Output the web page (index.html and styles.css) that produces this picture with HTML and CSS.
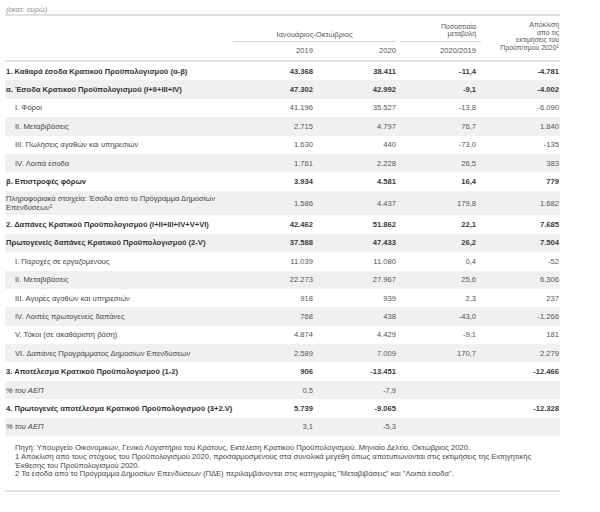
FILE: index.html
```html
<!DOCTYPE html>
<html lang="el">
<head>
<meta charset="utf-8">
<title>Εκτέλεση Κρατικού Προϋπολογισμού</title>
<link rel="stylesheet" href="styles.css">
</head>
<body>
<div class="page">
  <div class="unit">(εκατ. ευρώ)</div>
  <div class="head">
    <div class="h-period">Ιανουάριος-Οκτώβριος</div>
    <div class="h-change">Ποσοστιαία<br>μεταβολή</div>
    <div class="h-dev">Απόκλιση<br>από τις<br>εκτιμήσεις του<br>Προϋπ/σμού 2020<sup>1</sup></div>
    <div class="h-year y1">2019</div>
    <div class="h-year y2">2020</div>
    <div class="h-year y3">2020/2019</div>
  </div>
  <div class="rows">
    <div class="row bold"><div class="lbl">1. Καθαρά έσοδα Κρατικού Προϋπολογισμού (α-β)</div><div class="num">43.368</div><div class="num">38.411</div><div class="num">-11,4</div><div class="num">-4.781</div></div>
    <div class="row bold"><div class="lbl">α. Έσοδα Κρατικού Προϋπολογισμού (I+II+III+IV)</div><div class="num">47.302</div><div class="num">42.992</div><div class="num">-9,1</div><div class="num">-4.002</div></div>
    <div class="row sub"><div class="lbl">I. Φόροι</div><div class="num">41.196</div><div class="num">35.527</div><div class="num">-13,8</div><div class="num">-6.090</div></div>
    <div class="row sub"><div class="lbl">II. Μεταβιβάσεις</div><div class="num">2.715</div><div class="num">4.797</div><div class="num">76,7</div><div class="num">1.840</div></div>
    <div class="row sub"><div class="lbl">III. Πωλήσεις αγαθών και υπηρεσιών</div><div class="num">1.630</div><div class="num">440</div><div class="num">-73,0</div><div class="num">-135</div></div>
    <div class="row sub"><div class="lbl">IV. Λοιπά έσοδα</div><div class="num">1.761</div><div class="num">2.228</div><div class="num">26,5</div><div class="num">383</div></div>
    <div class="row bold"><div class="lbl">β. Επιστροφές φόρων</div><div class="num">3.934</div><div class="num">4.581</div><div class="num">16,4</div><div class="num">779</div></div>
    <div class="row double"><div class="lbl">Πληροφοριακά στοιχεία: Έσοδα από το Πρόγραμμα Δημοσίων<br>Επενδύσεων<sup>2</sup></div><div class="num">1.586</div><div class="num">4.437</div><div class="num">179,8</div><div class="num">1.682</div></div>
    <div class="row bold"><div class="lbl">2. Δαπάνες Κρατικού Προϋπολογισμού (I+II+III+IV+V+VI)</div><div class="num">42.462</div><div class="num">51.862</div><div class="num">22,1</div><div class="num">7.685</div></div>
    <div class="row bold"><div class="lbl">Πρωτογενείς δαπάνες Κρατικού Προϋπολογισμού (2-V)</div><div class="num">37.588</div><div class="num">47.433</div><div class="num">26,2</div><div class="num">7.504</div></div>
    <div class="row sub"><div class="lbl">I. Παροχές σε εργαζομένους</div><div class="num">11.039</div><div class="num">11.080</div><div class="num">0,4</div><div class="num">-52</div></div>
    <div class="row sub"><div class="lbl">II. Μεταβιβάσεις</div><div class="num">22.273</div><div class="num">27.967</div><div class="num">25,6</div><div class="num">6.306</div></div>
    <div class="row sub"><div class="lbl">III. Αγορές αγαθών και υπηρεσιών</div><div class="num">918</div><div class="num">939</div><div class="num">2,3</div><div class="num">237</div></div>
    <div class="row sub"><div class="lbl">IV. Λοιπές πρωτογενείς δαπάνες</div><div class="num">768</div><div class="num">438</div><div class="num">-43,0</div><div class="num">-1.266</div></div>
    <div class="row sub"><div class="lbl">V. Τόκοι (σε ακαθάριστη βάση)</div><div class="num">4.874</div><div class="num">4.429</div><div class="num">-9,1</div><div class="num">181</div></div>
    <div class="row sub"><div class="lbl">VI. Δαπάνες Προγράμματος Δημοσίων Επενδύσεων</div><div class="num">2.589</div><div class="num">7.009</div><div class="num">170,7</div><div class="num">2.279</div></div>
    <div class="row bold"><div class="lbl">3. Αποτέλεσμα Κρατικού Προϋπολογισμού (1-2)</div><div class="num">906</div><div class="num">-13.451</div><div class="num"></div><div class="num">-12.466</div></div>
    <div class="row pct"><div class="lbl">% του ΑΕΠ</div><div class="num">0,5</div><div class="num">-7,9</div><div class="num"></div><div class="num"></div></div>
    <div class="row bold"><div class="lbl">4. Πρωτογενές αποτέλεσμα Κρατικού Προϋπολογισμού (3+2.V)</div><div class="num">5.739</div><div class="num">-9.065</div><div class="num"></div><div class="num">-12.328</div></div>
    <div class="row pct"><div class="lbl">% του ΑΕΠ</div><div class="num">3,1</div><div class="num">-5,3</div><div class="num"></div><div class="num"></div></div>
  </div>
  <div class="notes">Πηγή: Υπουργείο Οικονομικών, Γενικό Λογιστήριο του Κράτους, Εκτέλεση Κρατικού Προϋπολογισμού, Μηνιαίο Δελτίο, Οκτώβριος 2020.<br>1 Απόκλιση από τους στόχους του Προϋπολογισμού 2020, προσαρμοσμένους στα συνολικά μεγέθη όπως αποτυπώνονται στις εκτιμήσεις της Εισηγητικής<br>Έκθεσης του Προϋπολογισμού 2020.<br>2 Τα έσοδα από το Πρόγραμμα Δημοσίων Επενδύσεων (ΠΔΕ) περιλαμβάνονται στις κατηγορίες "Μεταβιβάσεις" και "Λοιπά έσοδα".</div>
</div>
</body>
</html>
```
FILE: styles.css
```css
html, body {
  margin: 0;
  padding: 0;
  background: #ffffff;
}
body {
  font-family: "Liberation Sans", Arial, sans-serif;
  font-size: 7.6px;
  color: #444444;
}
.page {
  margin-left: 5px;
  width: 555px;
}
.unit {
  padding: 6px 0 0 1px;
  line-height: 8px;
  font-style: italic;
  color: #8a8a8a;
  border-bottom: 2px solid #e0e0e0;
}
.head {
  display: grid;
  grid-template-columns: 228px 82px 83px 83px 79px;
  grid-template-rows: 26px 18px;
  border-bottom: 2px solid #e0e0e0;
  color: #555555;
}
.h-period {
  grid-column: 2 / 4;
  grid-row: 1;
  align-self: end;
  text-align: center;
  line-height: 8px;
  padding-bottom: 2px;
  margin-right: 2px;
  border-bottom: 1px solid #d6d6d6;
}
.h-change {
  grid-column: 4;
  grid-row: 1;
  align-self: end;
  text-align: right;
  font-size: 6.9px;
  line-height: 7.2px;
  padding: 0 5px 4px 0;
  margin-left: 2px;
  border-bottom: 1px solid #d6d6d6;
}
.h-dev {
  grid-column: 5;
  grid-row: 1 / 3;
  align-self: end;
  text-align: right;
  font-size: 6.9px;
  line-height: 7.4px;
  padding: 0 1px 9px 0;
}
.h-dev sup, .lbl sup {
  font-size: 4.5px;
  vertical-align: 2.5px;
  line-height: 0;
}
.h-year {
  grid-row: 2;
  align-self: center;
  text-align: right;
  line-height: 8px;
  padding-right: 2px;
}
.y1 { grid-column: 2; }
.y2 { grid-column: 3; }
.y3 { grid-column: 4; padding-right: 5px; }
.row {
  display: grid;
  grid-template-columns: 228px 82px 83px 83px 79px;
  align-items: center;
  min-height: 18.4px;
  padding: 3.3px 0;
  box-sizing: border-box;
  line-height: 9px;
}
.row:nth-child(even) {
  background: #f0f0f0;
}
.lbl {
  padding-left: 1px;
  white-space: nowrap;
}
.sub .lbl {
  padding-left: 10px;
}
.pct .lbl {
  font-style: italic;
}
.num {
  text-align: right;
  padding-right: 2px;
  color: #555555;
}
.num:nth-child(4) { padding-right: 5px; }
.num:nth-child(5) { padding-right: 1px; }
.bold {
  font-weight: bold;
  color: #333333;
}
.bold .num {
  color: #3a3a3a;
}
.notes {
  padding: 8px 0 11px 10px;
  line-height: 8.8px;
  white-space: nowrap;
  border-bottom: 2px solid #e0e0e0;
  color: #444444;
}
```
